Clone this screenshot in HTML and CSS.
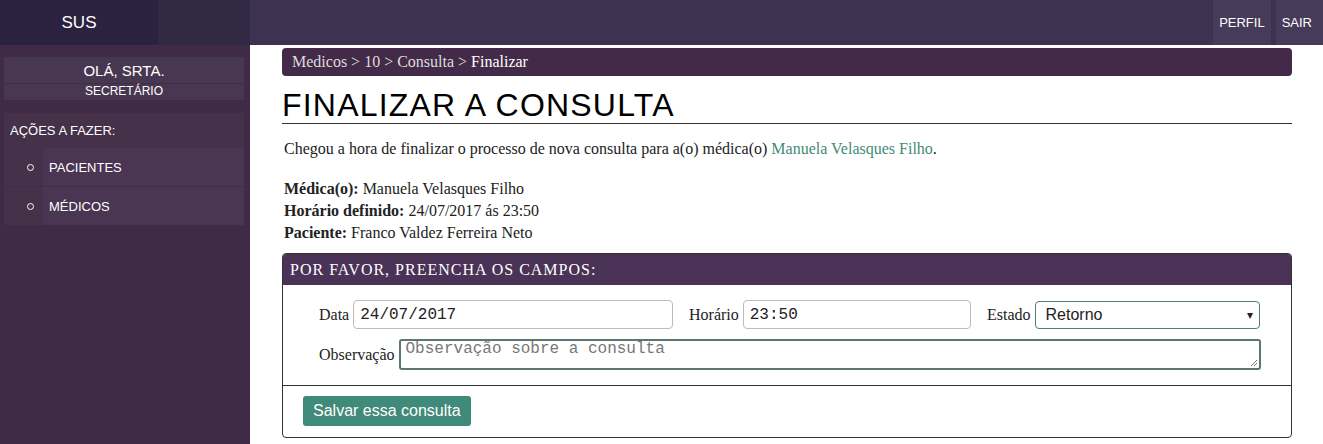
FILE: index.html
```html
<!DOCTYPE html>
<html lang="pt">
<head>
<meta charset="utf-8">
<title>SUS - Finalizar a consulta</title>
<link rel="stylesheet" href="styles.css">
</head>
<body>
<header class="topbar">
  <div class="brand"><span class="brand-name">SUS</span><span class="brand-pad"></span></div>
  <nav class="top-nav">
    <a class="top-link" href="#">PERFIL</a>
    <a class="top-link top-link-last" href="#">SAIR</a>
  </nav>
</header>
<div class="layout">
  <aside class="sidebar">
    <div class="user-box">
      <div class="user-name">OLÁ, SRTA.</div>
      <div class="user-role">SECRETÁRIO</div>
    </div>
    <div class="actions">
      <div class="actions-title">AÇÕES A FAZER:</div>
      <ul class="action-list">
        <li class="action-item"><span class="bullet"></span><span class="action-label">PACIENTES</span></li>
        <li class="action-item"><span class="bullet"></span><span class="action-label">MÉDICOS</span></li>
      </ul>
    </div>
  </aside>
  <main class="content">
    <div class="breadcrumb">Medicos &gt; 10 &gt; Consulta &gt; <span class="crumb-current">Finalizar</span></div>
    <h1 class="page-title">FINALIZAR A CONSULTA</h1>
    <p class="intro">Chegou a hora de finalizar o processo de nova consulta para a(o) médica(o) <a class="link" href="#">Manuela Velasques Filho</a>.</p>
    <div class="details">
      <div><b>Médica(o):</b> Manuela Velasques Filho</div>
      <div><b>Horário definido:</b> 24/07/2017 ás 23:50</div>
      <div><b>Paciente:</b> Franco Valdez Ferreira Neto</div>
    </div>
    <section class="panel">
      <div class="panel-head">POR FAVOR, PREENCHA OS CAMPOS:</div>
      <div class="panel-body">
        <div class="form-row">
          <label class="field field-date"><span class="field-label">Data</span><span class="input mono">24/07/2017</span></label>
          <label class="field field-time"><span class="field-label">Horário</span><span class="input mono">23:50</span></label>
          <label class="field field-state"><span class="field-label">Estado</span><span class="select"><span>Retorno</span><span class="caret">▾</span></span></label>
        </div>
        <div class="form-row obs-row">
          <span class="field-label">Observação</span>
          <span class="textarea mono">Observação sobre a consulta<svg class="grip" width="9" height="9" viewBox="0 0 9 9"><path d="M8 2L2 8M8 5L5 8" stroke="#777" stroke-width="1"/></svg></span>
        </div>
      </div>
      <div class="panel-foot">
        <button class="btn" type="button">Salvar essa consulta</button>
      </div>
    </section>
  </main>
</div>
</body>
</html>
```
FILE: styles.css
```css
* { box-sizing: border-box; }
html, body { margin: 0; height: 100%; }
body {
  font-family: "Liberation Serif", "Times New Roman", serif;
  font-size: 16px;
  color: #222;
  background: #fff;
  overflow: hidden;
}
.topbar {
  height: 45px;
  display: flex;
  background: #3d3350;
}
.brand {
  width: 250px;
  display: flex;
  background: #322945;
}
.brand-name {
  width: 158px;
  background: #2b2240;
  color: #fff;
  font-family: "Liberation Sans", Arial, sans-serif;
  font-size: 17px;
  display: flex;
  align-items: center;
  justify-content: center;
}
.brand-pad { flex: 1; }
.top-nav {
  margin-left: auto;
  display: flex;
  gap: 5px;
}
.top-link {
  display: flex;
  align-items: center;
  padding: 0 6px;
  background: #463b58;
  color: #fff;
  text-decoration: none;
  font-family: "Liberation Sans", Arial, sans-serif;
  font-size: 13px;
}
.top-link-last { padding-right: 11px; }
.layout {
  display: flex;
  height: calc(100% - 45px);
}
.sidebar {
  width: 250px;
  flex: none;
  background: #3f2b46;
  padding: 12px 6px 0 4px;
  font-family: "Liberation Sans", Arial, sans-serif;
  color: #fff;
}
.user-box {
  background: #483750;
  text-align: center;
}
.user-name {
  font-size: 15px;
  height: 27px;
  line-height: 26px;
  padding-top: 1px;
  border-bottom: 1px solid #3f2d47;
}
.user-role {
  font-size: 12px;
  height: 16px;
  line-height: 15px;
}
.actions {
  margin-top: 13px;
  background: #453149;
}
.actions-title {
  font-size: 13px;
  height: 35px;
  line-height: 35px;
  padding-left: 6px;
}
.action-list {
  list-style: none;
  margin: 0;
  padding: 0;
}
.action-item {
  display: flex;
  height: 39px;
  background: #4a3552;
  border-top: 1px solid #3f2d47;
}
.action-item:first-child { border-top: none; height: 38px; }
.bullet {
  width: 39px;
  flex: none;
  display: flex;
  align-items: center;
  justify-content: center;
  background: #453149;
}
.bullet::before {
  content: "";
  width: 5px;
  height: 5px;
  border: 1px solid #fff;
  border-radius: 50%;
  margin-left: 13px;
}
.action-label {
  display: flex;
  align-items: center;
  padding-left: 6px;
  font-size: 13px;
}
.content {
  flex: 1;
  padding: 3px 31px 0 32px;
}
.breadcrumb {
  background: #432a48;
  color: #ddd;
  border-radius: 4px;
  height: 28px;
  line-height: 27px;
  padding-left: 10px;
  font-size: 16px;
}
.crumb-current { color: #fff; }
.page-title {
  font-family: "Liberation Sans", Arial, sans-serif;
  font-weight: normal;
  font-size: 32px;
  letter-spacing: 1.2px;
  color: #000;
  margin: 11px 0 0;
  padding-bottom: 0;
  line-height: 36px;
  border-bottom: 1px solid #333;
}
.intro {
  margin: 14px 0 0 2px;
  line-height: 22px;
}
.link { color: #3f8a78; text-decoration: none; }
.details {
  margin: 18px 0 0 2px;
  line-height: 22px;
}
.panel {
  margin-top: 9px;
  border: 1px solid #333;
  border-radius: 4px;
  overflow: hidden;
}
.panel-head {
  background: #4b3257;
  color: #fff;
  height: 31px;
  line-height: 31px;
  padding-left: 7px;
  letter-spacing: 1px;
  font-size: 16px;
}
.panel-body {
  padding: 15px 30px 15px 36px;
  border-bottom: 1px solid #333;
}
.form-row {
  display: flex;
  gap: 16px;
}
.field {
  display: flex;
  align-items: center;
  gap: 4px;
}
.field-date { width: 354px; }
.field-time { width: 282px; }
.field-state { width: 273px; }
.field-label { white-space: nowrap; }
.input {
  flex: 1;
  height: 29px;
  border: 1px solid #bbb;
  border-radius: 4px;
  padding: 0 6px;
  display: flex;
  align-items: center;
  font-size: 16px;
}
.mono { font-family: "Liberation Mono", "Courier New", monospace; }
.select {
  flex: 1;
  height: 28px;
  border: 1px solid #4e7d74;
  border-radius: 4px;
  padding: 0 6px 0 10px;
  display: flex;
  align-items: center;
  justify-content: space-between;
  font-family: "Liberation Sans", Arial, sans-serif;
  font-size: 16px;
}
.caret { font-size: 12px; }
.obs-row {
  margin-top: 10px;
  gap: 4px;
  align-items: center;
}
.textarea {
  position: relative;
  flex: 1;
  height: 31px;
  border: 2px solid #5a7770;
  border-radius: 3px;
  padding: 0 5px;
  color: #777;
  font-size: 16px;
  line-height: 16px;
}
.grip { position: absolute; right: 1px; bottom: 1px; }
.panel-foot {
  padding: 10px 20px 11px;
}
.btn {
  background: #3f8a78;
  color: #fff;
  border: none;
  border-radius: 3px;
  height: 30px;
  padding: 0 10px;
  font-family: "Liberation Sans", Arial, sans-serif;
  font-size: 16px;
}
```
